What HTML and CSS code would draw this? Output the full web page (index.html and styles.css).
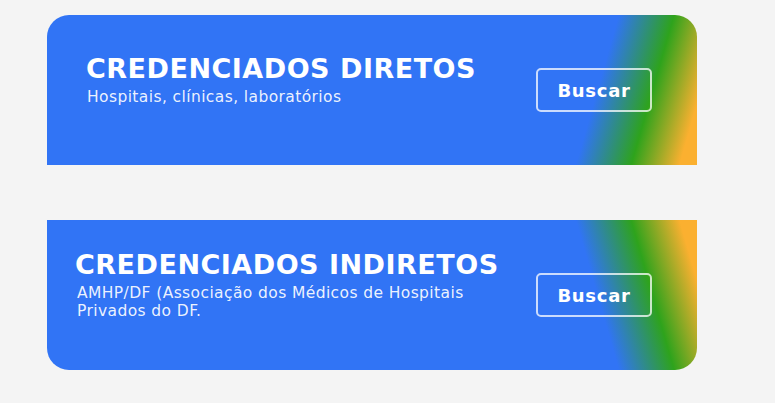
FILE: index.html
```html
<!DOCTYPE html>
<html lang="pt-BR">
<head>
<meta charset="utf-8">
<title>Credenciados</title>
<link rel="stylesheet" href="styles.css">
</head>
<body>
<main class="list">
  <section class="card card--top">
    <div class="card__text card__text--direct">
      <h2 class="card__title">CREDENCIADOS DIRETOS</h2>
      <p class="card__sub">Hospitais, clínicas, laboratórios</p>
    </div>
    <a class="card__btn" href="#">Buscar</a>
  </section>
  <section class="card card--bottom">
    <div class="card__text card__text--indirect">
      <h2 class="card__title">CREDENCIADOS INDIRETOS</h2>
      <p class="card__sub card__sub--wrap">AMHP/DF (Associação dos Médicos de Hospitais Privados do DF.</p>
    </div>
    <a class="card__btn" href="#">Buscar</a>
  </section>
</main>
</body>
</html>
```
FILE: styles.css
```css
html, body {
  margin: 0;
  padding: 0;
  background: #f4f4f4;
  font-family: "DejaVu Sans", "Open Sans", sans-serif;
}
.list {
  display: flex;
  flex-direction: column;
  gap: 55px;
  padding: 15px 0 0 47px;
}
.card {
  width: 650px;
  height: 150px;
  box-sizing: border-box;
  display: flex;
  align-items: center;
  justify-content: space-between;
  padding-right: 45px;
  color: #fff;
}
.card--top {
  border-radius: 22px 22px 0 0;
  background: linear-gradient(106deg, #3174f5 0%, #3174f5 82.5%, #2ea31c 90.5%, #fbb030 97.5%, #fbb030 100%);
}
.card--bottom {
  border-radius: 0 0 22px 22px;
  background: linear-gradient(74deg, #3174f5 0%, #3174f5 82.5%, #2ea31c 90.5%, #fbb030 97.5%, #fbb030 100%);
}
.card__text {
  margin-bottom: 20px;
}
.card__text--direct { padding-left: 39px; }
.card__text--indirect { padding-left: 28px; }
.card__title {
  margin: 0;
  font-size: 27px;
  font-weight: 700;
  line-height: 30px;
  letter-spacing: 0.5px;
}
.card__sub {
  margin: 4px 0 0 1px;
  font-size: 15.5px;
  line-height: 18.5px;
  letter-spacing: 0.4px;
  color: rgba(255, 255, 255, 0.92);
}
.card__text--indirect .card__sub { margin-left: 2px; }
.card__sub--wrap { width: 400px; }
.card__btn {
  width: 116px;
  height: 44px;
  box-sizing: border-box;
  border: 2px solid rgba(255, 255, 255, 0.75);
  border-radius: 5px;
  display: flex;
  align-items: center;
  justify-content: center;
  color: #fff;
  text-decoration: none;
  font-size: 18px;
  font-weight: 700;
  letter-spacing: 0.7px;
}
```
